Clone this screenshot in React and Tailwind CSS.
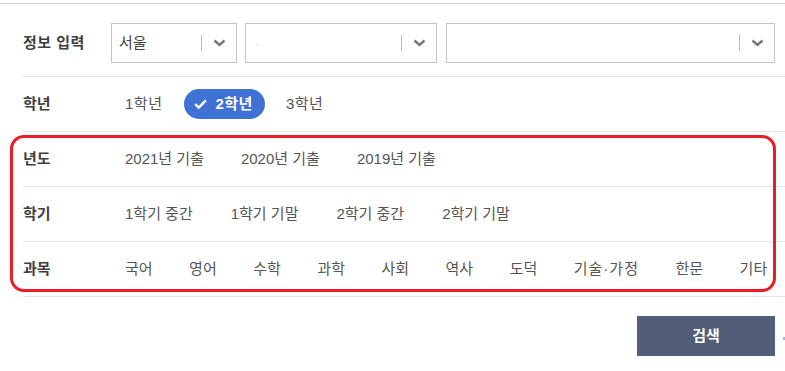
import React from 'react';

const years = ['2021년 기출', '2020년 기출', '2019년 기출'];
const terms = ['1학기 중간', '1학기 기말', '2학기 중간', '2학기 기말'];
const subjects = ['국어', '영어', '수학', '과학', '사회', '역사', '도덕', '기술·가정', '한문', '기타'];

const Chevron = () => (
  <svg width="13" height="8" viewBox="0 0 13 8" className="text-[#777]">
    <path d="M1.5 1.5l5 4.5 5-4.5" fill="none" stroke="currentColor" strokeWidth="2.4" />
  </svg>
);

const Select = ({ className, children }) => (
  <div className={`flex items-center h-[40px] border border-[#c4c4c4] bg-white ${className}`}>
    <div className="flex-1 pl-[7px] text-[15px] text-[#444] truncate">{children}</div>
    <div className="w-px h-[16px] bg-[#bbb]" />
    <div className="w-[34px] flex justify-center">
      <Chevron />
    </div>
  </div>
);

const Row = ({ label, children }) => (
  <div className="flex items-center h-[55px] border-b border-[#e3e3e3]">
    <div className="w-[102px] shrink-0 text-[15px] font-bold text-[#3f3f3f]">{label}</div>
    {children}
  </div>
);

const App = () => {
  return (
    <div
      className="relative w-[785px] h-[371px] bg-white overflow-hidden"
      style={{ fontFamily: '"Liberation Sans", "Noto Sans CJK KR", sans-serif' }}
    >
      <div className="mt-[3px] border-t border-[#cfcfcf]">
        <div className="ml-[23px]">
          {/* 정보 입력 */}
          <div className="flex items-center pt-[19px] pb-[13px] pr-[10px] border-b border-[#e3e3e3]">
            <div className="w-[88px] shrink-0 text-[15px] font-bold text-[#3f3f3f] tracking-[0.5px]">정보 입력</div>
            <Select className="w-[126px]">서울</Select>
            <Select className="w-[192px] ml-[8px]">
              <span className="text-[9px] text-[#aaa]">ㆍ</span>
            </Select>
            <Select className="flex-1 ml-[9px]" />
          </div>

          {/* 학년 */}
          <Row label="학년">
            <div className="flex items-center text-[15px] text-[#555]">
              <span className="tracking-[0.5px]">1학년</span>
              <span className="ml-[22px] flex items-center h-[30px] pl-[10px] pr-[12px] rounded-full bg-[#3f72d4] text-white font-bold tracking-[0.5px]">
                <svg width="13" height="10" viewBox="0 0 13 10" className="mr-[8px]">
                  <path d="M1.2 5.2l3.6 3.4L11.8 1.4" fill="none" stroke="currentColor" strokeWidth="2.4" />
                </svg>
                2학년
              </span>
              <span className="ml-[21px] tracking-[0.5px]">3학년</span>
            </div>
          </Row>

          <Row label="년도">
            <div className="flex items-center gap-[37px] text-[15px] text-[#555]">
              {years.map((y) => (
                <span key={y}>{y}</span>
              ))}
            </div>
          </Row>

          <Row label="학기">
            <div className="flex items-center gap-[38px] text-[15px] text-[#555]">
              {terms.map((t) => (
                <span key={t}>{t}</span>
              ))}
            </div>
          </Row>

          <Row label="과목">
            <div className="flex items-center gap-[36.5px] text-[15px] text-[#555]">
              {subjects.map((s) => (
                <span key={s} className={s === '기술·가정' ? 'tracking-[1px]' : ''}>
                  {s}
                </span>
              ))}
            </div>
          </Row>
        </div>

        <div className="flex items-center justify-end mt-[19px] pr-[10px]">
          <button className="w-[138px] h-[40px] bg-[#525e78] text-white text-[15px] font-bold">검색</button>
        </div>
      </div>

      {/* highlight annotation */}
      <div className="absolute left-[10px] top-[135px] w-[766px] h-[157px] border-[3px] border-[#ed1c24] rounded-[14px] pointer-events-none" />
      <span className="absolute left-[783px] top-[337px] w-[2px] h-[3px] bg-[#9bb5e6]" />
    </div>
  );
};

export default App;
